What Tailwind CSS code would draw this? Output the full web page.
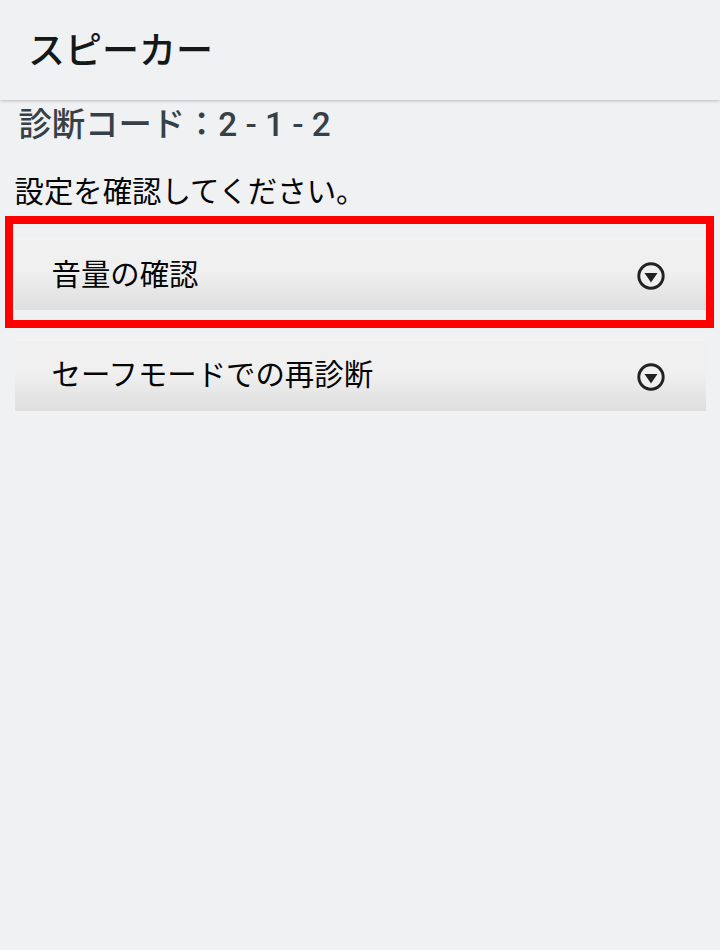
<!DOCTYPE html>
<html lang="ja">
<head>
    <meta charset="UTF-8">
    <meta name="viewport" content="width=device-width, initial-scale=1.0">
    <title>スピーカー</title>
    <script src="https://cdn.jsdelivr.net/npm/@tailwindcss/browser@4"></script>
</head>
<body class="min-h-screen bg-[#eff1f3] font-[Roboto,'Noto_Sans_CJK_JP',sans-serif] text-[#050505] whitespace-nowrap overflow-hidden">

    <!-- App bar -->
    <header class="h-[100px] flex items-center pl-[28px] pt-[3px] shadow-[0_1px_3px_rgba(0,0,0,0.22)]">
        <h1 class="text-[37px] leading-[97px] font-medium text-[#141819]">スピーカー</h1>
    </header>

    <main class="pl-[14.5px] pr-[14px]">
        <h2 class="h-[50px] pl-1 text-[33.3px] leading-[49px] font-medium text-[#364147]">診断コード：2 - 1 - 2</h2>
        <p class="h-[88px] pt-[21px] text-[29.4px] leading-[42px]">設定を確認してください。</p>

        <!-- Check items -->
        <div class="flex flex-col gap-[29px]">
            <div class="relative">
                <button class="w-full h-[72px] flex items-center justify-between pl-[37px] pr-[41px] border-t-2 border-[#f3f3f4] bg-linear-to-b from-[#f0f0f0] from-45% to-[#dedede] text-[29.4px]">
                    <span class="leading-[68px]">音量の確認</span>
                    <svg class="w-7 h-7 mt-px" viewBox="0 0 28 28">
                        <circle cx="14" cy="14" r="12.2" fill="#f0f0f0" stroke="#222" stroke-width="2.9"/>
                        <path d="M7.5 11h13L14 20.5z" fill="#222"/>
                    </svg>
                </button>
                <!-- Highlight frame -->
                <div class="absolute -top-[22px] -left-[9.5px] w-[709px] h-[112px] border-8 border-[#ff0000]"></div>
            </div>
            <button class="w-full h-[72px] flex items-center justify-between pl-[37px] pr-[41px] border-t-2 border-[#f3f3f4] bg-linear-to-b from-[#f0f0f0] from-45% to-[#dedede] text-[29.4px]">
                <span class="leading-[68px] pb-0.5">セーフモードでの再診断</span>
                <svg class="w-7 h-7 mt-px" viewBox="0 0 28 28">
                    <circle cx="14" cy="14" r="12.2" fill="#f0f0f0" stroke="#222" stroke-width="2.9"/>
                    <path d="M7.5 11h13L14 20.5z" fill="#222"/>
                </svg>
            </button>
        </div>
    </main>

</body>
</html>
